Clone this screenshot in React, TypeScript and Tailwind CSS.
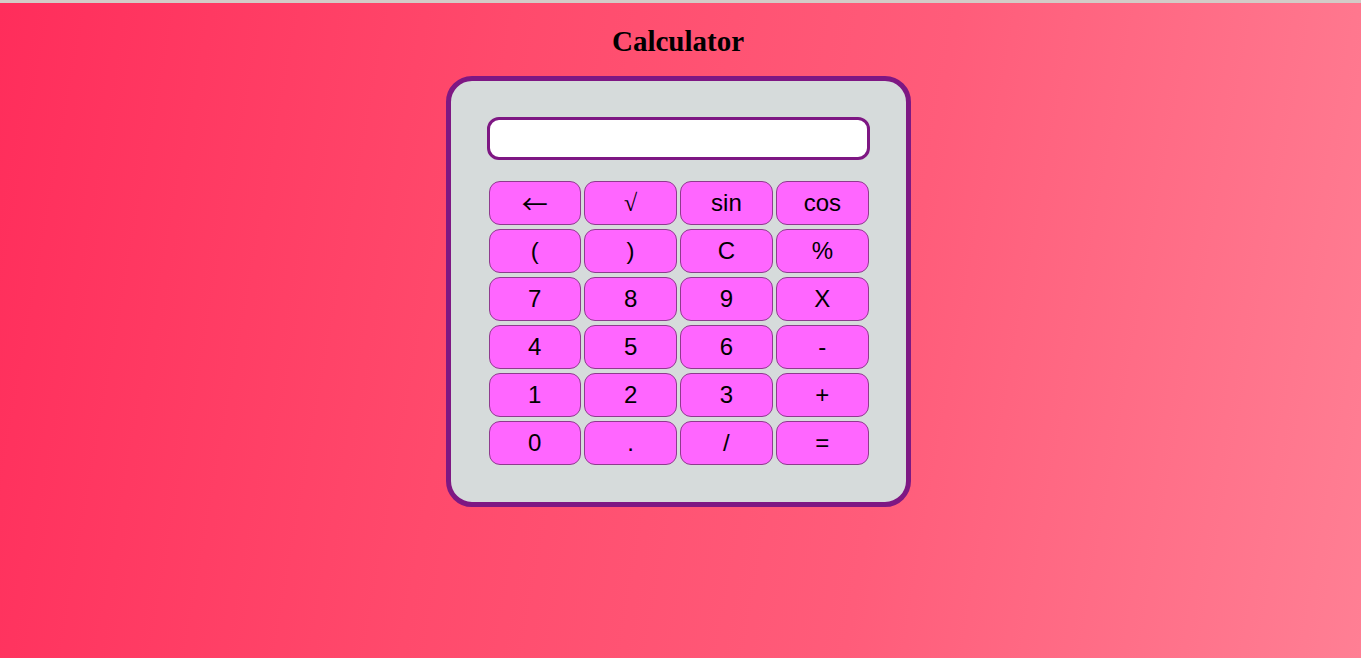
import React, { useState } from 'react';

const KEYS = [
  '←', '√', 'sin', 'cos',
  '(', ')', 'C', '%',
  '7', '8', '9', 'X',
  '4', '5', '6', '-',
  '1', '2', '3', '+',
  '0', '.', '/', '=',
];

const fontFor = (k: string) => {
  if (k === '←') return "font-['Noto_Sans_CJK_SC',sans-serif] text-[26px]";
  if (k === '√') return "font-['Liberation_Serif',serif] text-[24px]";
  return "font-['Liberation_Sans',sans-serif] text-[24px]";
};

export default function App() {
  const [value, setValue] = useState('');

  const press = (k: string) => {
    if (k === 'C') return setValue('');
    if (k === '←') return setValue((v) => v.slice(0, -1));
    if (k === '=') {
      try {
        const expr = value.replace(/X/g, '*');
        // eslint-disable-next-line no-new-func
        setValue(String(Function(`return (${expr})`)()));
      } catch {
        setValue('Error');
      }
      return;
    }
    setValue((v) => v + k);
  };

  return (
    <div className="min-h-screen w-full bg-[linear-gradient(100deg,#ff2d5b_0%,#ff4a6c_35%,#ff5c7a_65%,#ff7f94_100%)]">
      {/* top strip */}
      <div className="h-[3px] bg-[#d3cbc7]" />

      <div className="flex flex-col items-center pr-[5px]">
        <h1 className="mt-[21px] text-[29px] leading-[34px] font-bold text-black font-['Liberation_Serif',serif]">
          Calculator
        </h1>

        {/* CARD */}
        <div className="mt-[18px] w-[465px] rounded-[26px] border-[5px] border-[#7e1783] bg-[#d6dbdb] px-[36px] pt-[36px] pb-[37px]">
          <input
            value={value}
            readOnly
            className="block h-[43px] w-full rounded-[12px] border-[3px] border-[#7e1783] bg-white px-3 text-[22px] outline-none font-['Liberation_Sans',sans-serif]"
          />

          <div className="mt-[21px] ml-[2px] grid w-[380px] grid-cols-4 gap-x-[3.5px] gap-y-[4px]">
            {KEYS.map((k) => (
              <button
                key={k}
                onClick={() => press(k)}
                className={`h-[44px] rounded-[11px] border border-[#8e3b8e] bg-[#ff66ff] leading-none text-black ${fontFor(k)}`}
              >
                {k}
              </button>
            ))}
          </div>
        </div>
      </div>
    </div>
  );
}
